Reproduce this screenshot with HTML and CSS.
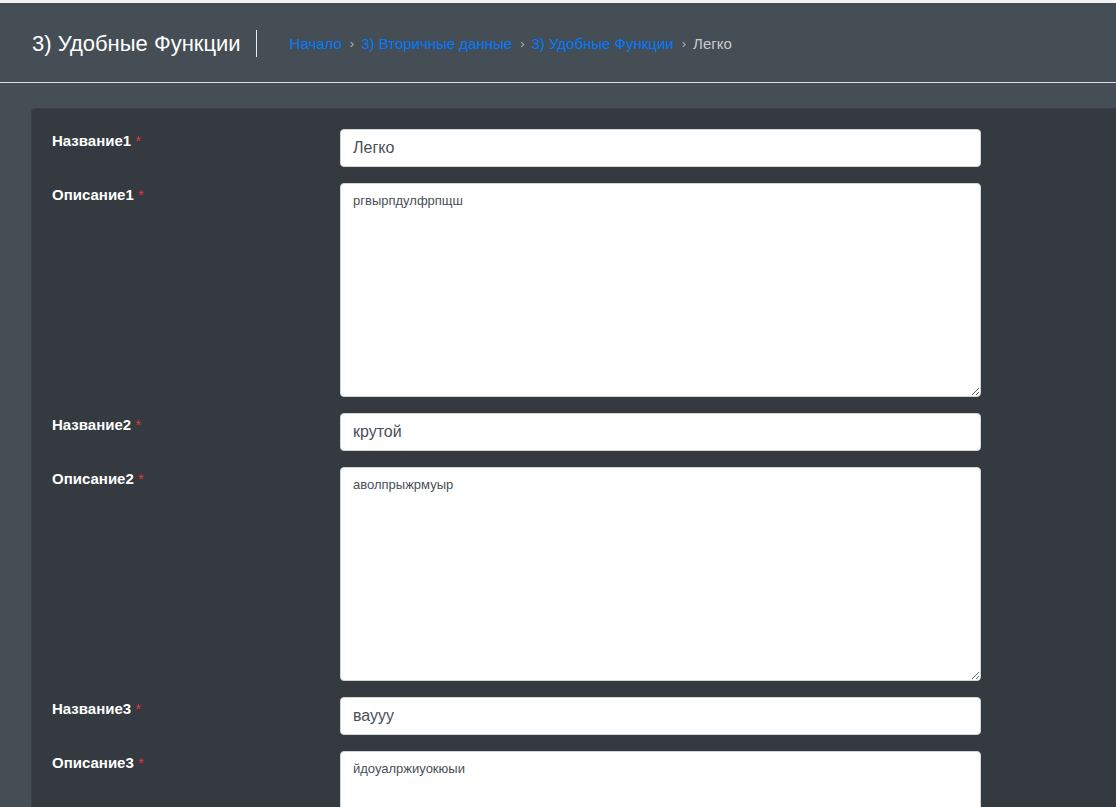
FILE: index.html
```html
<!DOCTYPE html>
<html lang="ru">
<head>
<meta charset="utf-8">
<title>3) Удобные Функции</title>
<link rel="stylesheet" href="styles.css">
</head>
<body>
<div class="topstrip"></div>
<header class="page-header">
  <h1 class="page-title">3) Удобные Функции</h1>
  <nav class="crumbs">
    <a href="#">Начало</a><span class="sep">›</span>
    <a href="#">3) Вторичные данные</a><span class="sep">›</span>
    <a href="#">3) Удобные Функции</a><span class="sep">›</span>
    <span class="current">Легко</span>
  </nav>
</header>
<main class="content">
  <div class="card">
    <form class="form">
      <label class="lbl">Название1 <span class="req">*</span></label>
      <input class="ctrl" type="text" value="Легко">
      <label class="lbl">Описание1 <span class="req">*</span></label>
      <textarea class="ctrl area">ргвырпдулфрпщш</textarea>
      <label class="lbl">Название2 <span class="req">*</span></label>
      <input class="ctrl" type="text" value="крутой">
      <label class="lbl">Описание2 <span class="req">*</span></label>
      <textarea class="ctrl area">аволпрыжрмуыр</textarea>
      <label class="lbl">Название3 <span class="req">*</span></label>
      <input class="ctrl" type="text" value="ваууу">
      <label class="lbl">Описание3 <span class="req">*</span></label>
      <textarea class="ctrl area">йдоуалржиуокюыи</textarea>
    </form>
  </div>
</main>
</body>
</html>
```
FILE: styles.css
```css
html, body {
  margin: 0;
  padding: 0;
  background: #454d55;
  font-family: "Liberation Sans", Arial, sans-serif;
  overflow: hidden;
}
.topstrip {
  height: 3px;
  background: #f1f3f5;
}
.page-header {
  height: 80px;
  box-sizing: border-box;
  display: flex;
  align-items: center;
  padding-left: 32px;
  border-bottom: 1px solid #dee2e6;
  background: #454d55;
}
.page-title {
  margin: 0;
  font-size: 22px;
  font-weight: 400;
  color: #ffffff;
  padding-right: 15px;
  border-right: 1px solid #e9ecef;
  line-height: 27px;
  margin-top: 2px;
}
.crumbs {
  margin-left: 33px;
  font-size: 15px;
  display: flex;
  align-items: center;
  margin-top: 2px;
}
.crumbs a {
  color: #007bff;
  text-decoration: none;
}
.crumbs .sep {
  color: #adb5bd;
  padding: 0 7px 0 8px;
  font-size: 13px;
}
.crumbs .current {
  color: #c8ccd0;
}
.content {
  padding: 25px 0 0 31px;
}
.card {
  width: 1120px;
  background: #343a40;
  border: 1px solid #3a4047;
  border-radius: 4px 0 0 0;
  padding: 20px;
  min-height: 800px;
  box-sizing: border-box;
}
.form {
  display: grid;
  grid-template-columns: 288px 641px;
  row-gap: 16px;
}
.lbl {
  color: #ffffff;
  font-weight: 700;
  font-size: 15px;
  line-height: 24px;
}
.req {
  color: #dc3545;
  font-weight: 400;
}
.ctrl {
  box-sizing: border-box;
  width: 641px;
  height: 38px;
  margin: 0;
  padding: 6px 12px;
  border: 1px solid #ced4da;
  border-radius: 4px;
  background: #ffffff;
  color: #495057;
  font-family: "Liberation Sans", Arial, sans-serif;
  font-size: 16px;
  line-height: 24px;
}
.area {
  height: 214px;
  font-size: 13px;
  line-height: 20px;
  padding-top: 7px;
  resize: vertical;
}
```
